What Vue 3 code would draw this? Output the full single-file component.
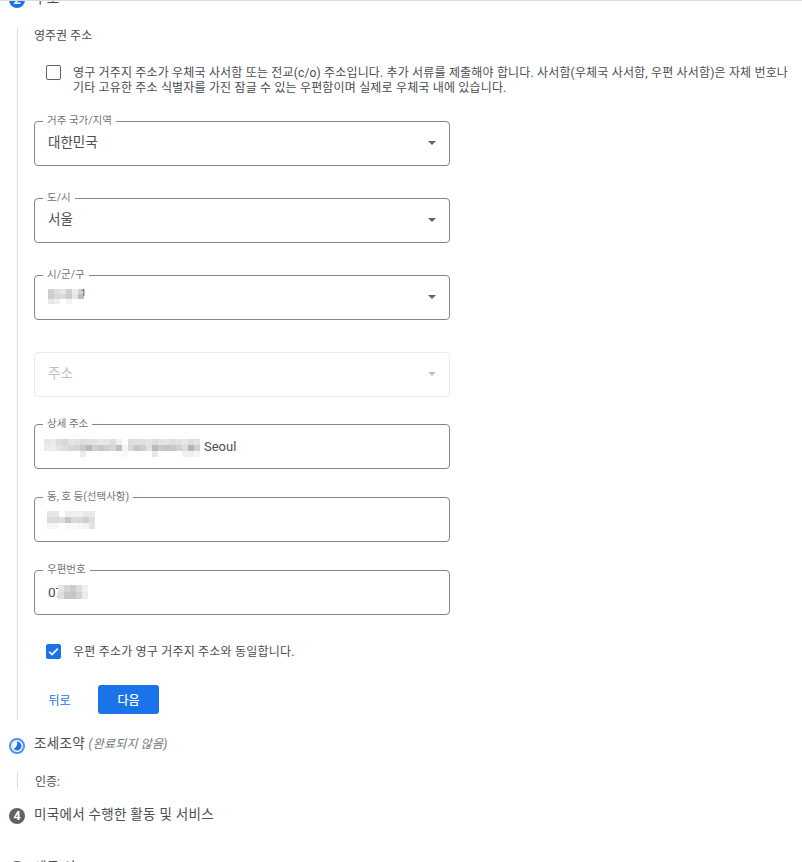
<script setup>
const fields = [
  { label: '거주 국가/지역', value: '대한민국', top: 0 },
  { label: '도/시', value: '서울', top: 32 },
  {
    label: '시/군/구', value: '', top: 32, high: true, h: 5, tail: '1',
    blur: [
      ['#cfcfcf', '#dedede', '#e6e6e6', '#cfcfcf', '#ececec', '#d2d2d2'],
      ['#cdcdcd', '#d9d9d9', '#dadada', '#cdcdcd', '#e6e6e6', '#bdbdbd'],
      ['#e8e8e8', '#eeeeee', '#ffffff', '#f4f4f4', '#ffffff', '#ffffff'],
    ],
  },
]
const lower = [
  {
    label: '상세 주소', tail: 'Seoul', top: 27, h: 6, ml: -4, mt: 5,
    blur: [
      ['#e6e6e6', '#eaeaea', '#dcdcdc', '#d8d8d8', '#e4e4e4', '#e2e2e2', '#dcdcdc', '#e0e0e0', '#e2e2e2', '#e8e8e8', '#e6e6e6', '#dddddd', '#f0f0f0', '#ffffff', '#dddddd', '#e0e0e0', '#e0e0e0', '#e4e4e4', '#dddddd', '#e2e2e2', '#e4e4e4', '#dedede', '#e2e2e2', '#e6e6e6', '#dcdcdc', '#e2e2e2'],
      ['#ececec', '#ececec', '#e4e4e4', '#dddddd', '#d8d8d8', '#d4d4d4', '#c8c8c8', '#b8b8b8', '#cfcfcf', '#c8c8c8', '#cfcfcf', '#d6d6d6', '#c0c0c0', '#f4f4f4', '#d8d8d8', '#c4c4c4', '#cfcfcf', '#e2e2e2', '#bababa', '#c8c8c8', '#c4c4c4', '#c8c8c8', '#d0d0d0', '#dddddd', '#b4b4b4', '#cfcfcf'],
      ['#ffffff', '#ffffff', '#ffffff', '#ffffff', '#ffffff', '#ffffff', '#ebebeb', '#ffffff', '#ffffff', '#ffffff', '#ffffff', '#ffffff', '#ffffff', '#f8f8f8', '#ffffff', '#ffffff', '#ffffff', '#ffffff', '#e8e8e8', '#ffffff', '#ffffff', '#ffffff', '#ffffff', '#f2f2f2', '#f0f0f0', '#f6f6f6'],
    ],
  },
  {
    label: '동, 호 등(선택사항)', top: 28, h: 6, ml: -1, mt: 2,
    blur: [
      ['#e6e6e6', '#e6e6e6', '#ffffff', '#eeeeee', '#efefef', '#f0f0f0', '#e8e8e8', '#e8e8e8'],
      ['#dadada', '#dadada', '#dedede', '#c6c6c6', '#dadada', '#d8d8d8', '#cecece', '#dedede'],
      ['#f6f6f6', '#f6f6f6', '#ffffff', '#fafafa', '#fafafa', '#f5f5f5', '#f4f4f4', '#e2e2e2'],
    ],
  },
  {
    label: '우편번호', head: '07', top: 28, h: 7, ml: -5, mt: 0,
    blur: [
      ['#e6e6e6', '#d6d6d6', '#cccccc', '#dedede', '#efefef'],
      ['#dedede', '#c8c8c8', '#c6c6c6', '#d2d2d2', '#ebebeb'],
    ],
  },
]
</script>

<template>
  <div class="page">
    <div class="top-rule"></div>
    <header class="step head-2">
      <span class="badge active">2</span>
      <span class="step-title">주소</span>
    </header>
    <section class="body">
      <p class="sub">영주권 주소</p>
      <label class="check first">
        <span class="box"></span>
        <span class="check-text">영구 거주지 주소가 우체국 사서함 또는 전교(c/o) 주소입니다. 추가 서류를 제출해야 합니다. 사서함(우체국 사서함, 우편 사서함)은 자체 번호나 기타 고유한 주소 식별자를 가진 잠글 수 있는 우편함이며 실제로 우체국 내에 있습니다.</span>
      </label>
      <div v-for="f in fields" :key="f.label" class="field" :style="{ marginTop: f.top + 'px' }">
        <span class="legend">{{ f.label }}</span>
        <span class="value kr" :class="{ high: f.high }">
          {{ f.value }}
          <span v-if="f.blur" class="mosaic">
            <span v-for="(row, i) in f.blur" :key="i" class="mrow">
              <i v-for="(c, j) in row" :key="j" :style="{ background: c, height: f.h + 'px' }"></i>
            </span>
          </span>
          <span v-if="f.tail" class="tail-sup">{{ f.tail }}</span>
        </span>
        <span class="arrow"></span>
      </div>
      <div class="field disabled">
        <span class="value kr">주소</span>
        <span class="arrow"></span>
      </div>
      <div v-for="f in lower" :key="f.label" class="field" :style="{ marginTop: f.top + 'px' }">
        <span class="legend">{{ f.label }}</span>
        <span class="value">
          <span v-if="f.head">{{ f.head }}</span>
          <span class="mosaic" :style="{ marginLeft: f.ml + 'px', marginTop: f.mt + 'px' }">
            <span v-for="(row, i) in f.blur" :key="i" class="mrow">
              <i v-for="(c, j) in row" :key="j" :style="{ background: c, height: f.h + 'px' }"></i>
            </span>
          </span>
          <span v-if="f.tail" class="tail">{{ f.tail }}</span>
        </span>
      </div>
      <label class="check second">
        <span class="box checked">
          <svg viewBox="0 0 13 13" width="13" height="13"><path d="M2.2 6.8 5 9.6 10.8 3.6" fill="none" stroke="#fff" stroke-width="1.6"/></svg>
        </span>
        <span class="check-text">우편 주소가 영구 거주지 주소와 동일합니다.</span>
      </label>
      <div class="actions">
        <button class="back">뒤로</button>
        <button class="next">다음</button>
      </div>
    </section>
    <header class="step head-3">
      <svg class="icon" viewBox="0 0 16 16" width="16" height="16">
        <circle cx="8" cy="8" r="7" fill="#fff" stroke="#4f8ff7" stroke-width="2"/>
        <circle cx="8" cy="8" r="4.6" fill="#fff" stroke="#a9c8fa" stroke-width="0.6"/>
        <path d="M8 3.6A4.4 4.4 0 1 1 4.4 10.6C7 10.6 8.6 7 8 3.6z" fill="#1a73e8"/>
      </svg>
      <span class="step-title">조세조약 <em>(완료되지 않음)</em></span>
    </header>
    <section class="body short"><p class="sub">인증:</p></section>
    <header class="step head-4">
      <span class="badge grey">4</span>
      <span class="step-title">미국에서 수행한 활동 및 서비스</span>
    </header>
    <header class="step head-5">
      <span class="badge grey">5</span>
      <span class="step-title">세금 신고</span>
    </header>
  </div>
</template>

<style>
html, body { margin: 0; background: #fff; }
</style>

<style scoped>
.page {
  position: relative;
  height: 862px;
  overflow: hidden;
  background: #fff;
  font-family: Roboto, "Noto Sans CJK KR", sans-serif;
  color: #4a4e52;
}
.top-rule { position: absolute; inset: 0 0 auto 0; height: 1px; background: #dadce0; }
.step { display: flex; align-items: center; gap: 9px; height: 16px; padding-left: 9px; }
.head-2 { margin-top: -8px; }
.head-3 { margin-top: 18px; }
.head-4 { margin-top: 19px; }
.head-5 { margin-top: 37px; }
.step-title { font-size: 13.5px; line-height: 16px; color: #4a4e52; letter-spacing: .3px; margin-top: -5px; }
.step-title em { font-size: 12px; letter-spacing: .2px; color: #70757a; }
.badge {
  width: 16px; height: 16px; border-radius: 50%; color: #fff;
  font-size: 12.5px; font-weight: 700; line-height: 16px; text-align: center; flex: none;
}
.badge.active { background: #1a73e8; }
.badge.grey { background: #5f6368; }
.icon { flex: none; }
.body {
  margin: 20px 0 0 17px;
  width: 416px;
  padding: 0 0 6px 16px;
  border-left: 1px solid #dadce0;
}
.body > .sub { padding-top: 1px; margin-bottom: -1px; }
.body.short { margin-top: 18px; padding: 0 0 0 17px; height: 17px; display: flex; align-items: center; }
.sub { margin: 0; font-size: 12px; line-height: 14px; }
.check { display: flex; gap: 12px; }
.check.first { width: 735px; margin: 23px 0 26px 12px; }
.check.second { margin: 29px 0 0 12px; height: 15px; align-items: center; }
.box {
  width: 13px; height: 13px; flex: none; border: 1px solid #5f6368; border-radius: 2px;
  box-sizing: content-box; background: #fff;
}
.box.checked { background: #1a73e8; border-color: #1a73e8; }
.box svg { display: block; }
.check-text { font-size: 12px; line-height: 15px; color: #4a4e52; letter-spacing: .2px; }
.check.first .check-text { width: 720px; flex: none; letter-spacing: .17px; margin: 1px 0 -1px; }
.check.second .check-text { margin-top: 2px; }
.field {
  position: relative;
  box-sizing: border-box;
  width: 416px; height: 45px;
  border: 1px solid #80868b;
  border-radius: 4px;
  display: flex; align-items: center;
  padding: 0 12px 2px 13px;
}
.legend {
  position: absolute; top: -7px; left: 8px;
  padding: 0 4px; background: #fff;
  font-size: 10.5px; line-height: 12px; color: #70757a;
}
.value { font-size: 13.5px; color: #4a4e52; display: flex; align-items: center; flex: 1; }
.value.kr { padding-bottom: 3px; }
.value.high { align-self: flex-start; margin-top: 13px; padding-bottom: 0; }
.arrow { width: 0; height: 0; border: 4.5px solid transparent; border-top: 4.5px solid #5f6368; border-bottom: 0; margin-right: 1px; }
.mosaic { display: inline-block; }
.mrow { display: flex; }
.mrow i { width: 6px; display: block; }
.tail { margin-left: 4px; font-size: 13px; margin-top: -1px; padding-top: 2px; }
.tail-sup { font-size: 9px; line-height: 9px; align-self: flex-start; margin-left: -3px; }
.disabled { margin-top: 32px; border-color: #e8eaed; }
.disabled .value { color: #bdc1c6; }
.disabled .arrow { border-top-color: #bdc1c6; }
.actions { display: flex; align-items: center; gap: 27px; margin: 26px 0 0 14px; }
button { font-family: inherit; font-size: 12px; border: 0; cursor: pointer; padding: 0; }
.back { background: none; color: #1a73e8; width: 23px; padding-bottom: 1px; }
.next { width: 61px; height: 29px; border-radius: 3px; background: #1a73e8; color: #fff; font-weight: 500; }
</style>
